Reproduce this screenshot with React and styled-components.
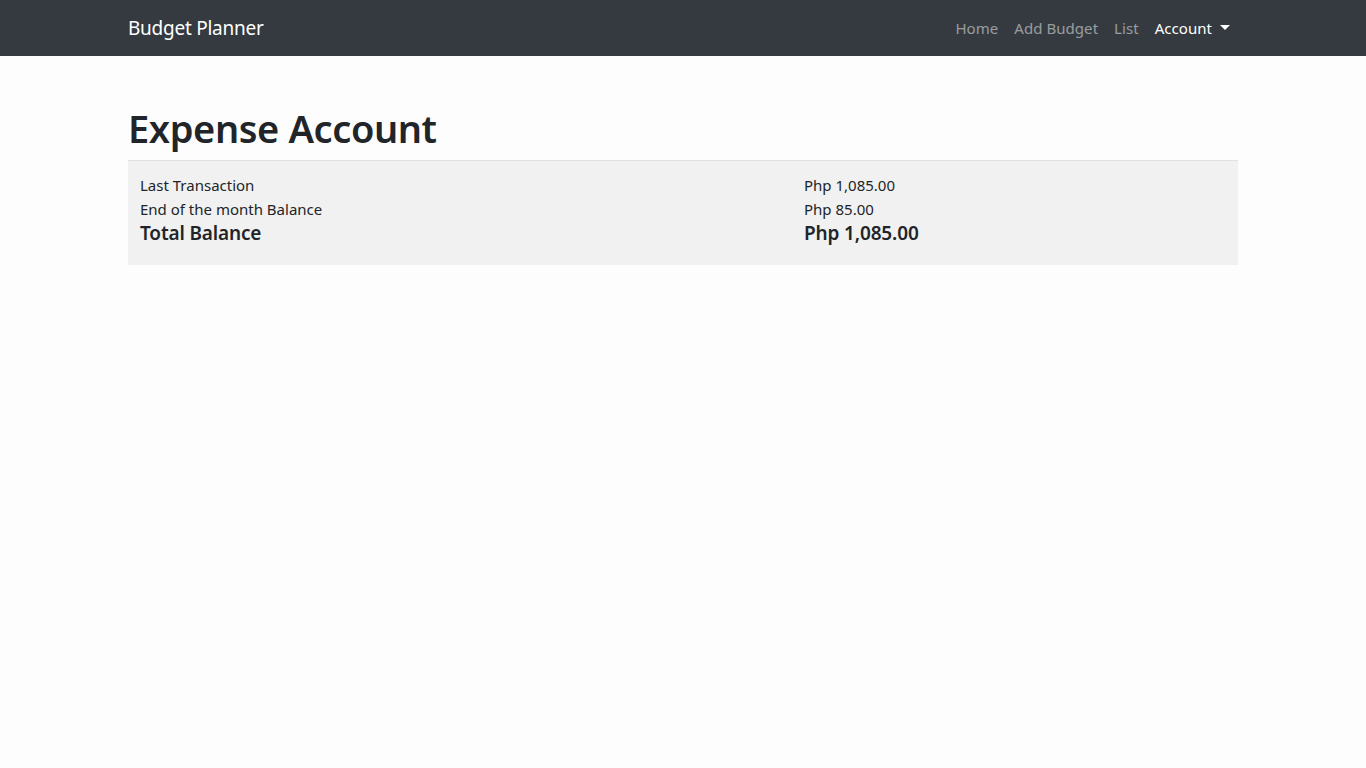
import React from "react";
import styled, { createGlobalStyle } from "styled-components";

const Global = createGlobalStyle`
  * { box-sizing: border-box; }
  body {
    margin: 0;
    font-family: "Noto Sans", "Open Sans", "Liberation Sans", sans-serif;
    font-size: 16px;
    line-height: 1.5;
    color: #212529;
    background: #fdfdfd;
  }
`;

const Navbar = styled.nav`
  background: #343a40;
  height: 56px;
`;

const Container = styled.div`
  width: 1140px;
  margin: 0 auto;
  padding: 0 15px;
`;

const NavInner = styled(Container)`
  height: 56px;
  display: flex;
  align-items: center;
  justify-content: space-between;
`;

const Brand = styled.a`
  color: #fff;
  font-size: 19px;
  line-height: 30px;
  text-decoration: none;
  letter-spacing: -0.25px;
`;

const NavList = styled.ul`
  display: flex;
  list-style: none;
  margin: 0;
  padding: 0;
`;

const NavLink = styled.a`
  display: flex;
  align-items: center;
  padding: 8px 8px;
  font-size: 15px;
  letter-spacing: 0.05px;
  color: ${(p) => (p.$active ? "#fff" : "rgba(255,255,255,0.5)")};
  text-decoration: none;
`;

const Caret = styled.span`
  display: inline-block;
  margin-left: 8px;
  width: 0;
  height: 0;
  border-top: 5px solid #fff;
  border-left: 5px solid transparent;
  border-right: 5px solid transparent;
  transform: translateY(-1px);
`;

const Main = styled(Container)`
  padding-top: 48px;
`;

const Title = styled.h1`
  margin: 0 0 8px;
  font-size: 38px;
  font-weight: 600;
  line-height: 48px;
  letter-spacing: -0.4px;
`;

const Table = styled.div`
  display: grid;
  grid-template-columns: 664px 1fr;
  background: #f1f1f1;
  border-top: 1px solid #dee2e6;
`;

const Cell = styled.div`
  padding: 12px 12px 12px;
  display: flex;
  flex-direction: column;
`;

const Line = styled.span`
  font-size: 15px;
  line-height: 24px;
  letter-spacing: 0;
`;

const Total = styled.h5`
  margin: 0 0 8px;
  font-size: 19px;
  font-weight: 600;
  line-height: 24px;
  letter-spacing: -0.15px;
`;

export default function App() {
  return (
    <>
      <Global />
      <Navbar>
        <NavInner>
          <Brand href="#">Budget Planner</Brand>
          <NavList>
            <li><NavLink href="#">Home</NavLink></li>
            <li><NavLink href="#">Add Budget</NavLink></li>
            <li><NavLink href="#">List</NavLink></li>
            <li>
              <NavLink href="#" $active>
                Account<Caret />
              </NavLink>
            </li>
          </NavList>
        </NavInner>
      </Navbar>
      <Main>
        <Title>Expense Account</Title>
        <Table>
          <Cell>
            <Line>Last Transaction</Line>
            <Line>End of the month Balance</Line>
            <Total>Total Balance</Total>
          </Cell>
          <Cell>
            <Line>Php 1,085.00</Line>
            <Line>Php 85.00</Line>
            <Total>Php 1,085.00</Total>
          </Cell>
        </Table>
      </Main>
    </>
  );
}
